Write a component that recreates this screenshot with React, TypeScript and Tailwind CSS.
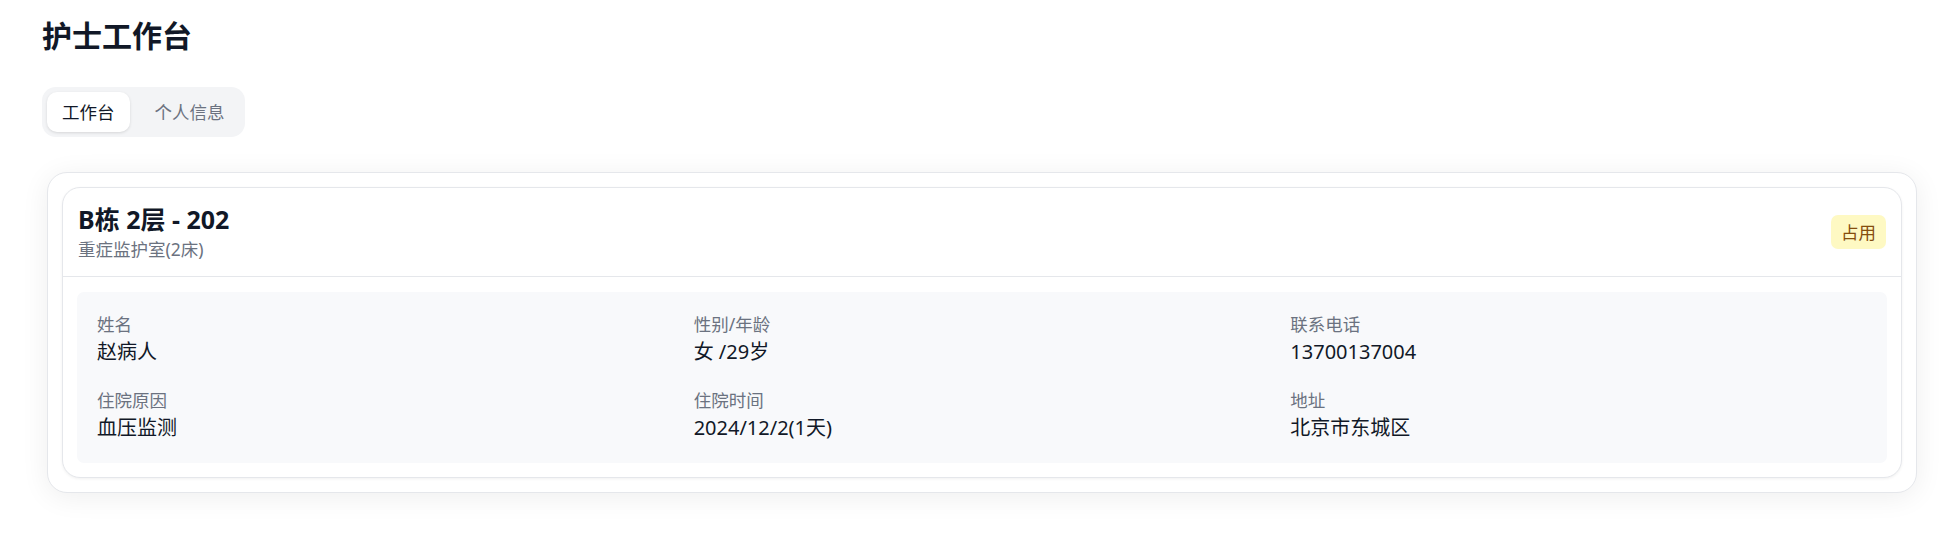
import { useState } from "react";

export default function App() {
  const [tab, setTab] = useState<"work" | "profile">("work");

  const fields = [
    { label: "姓名", value: "赵病人" },
    { label: "性别/年龄", value: "女 /29岁" },
    { label: "联系电话", value: "13700137004" },
    { label: "住院原因", value: "血压监测" },
    { label: "住院时间", value: "2024/12/2(1天)" },
    { label: "地址", value: "北京市东城区" },
  ];

  return (
    <div
      className="min-h-screen bg-white px-[42px] pt-[18px] pb-[40px] text-[#111827]"
      style={{ fontFamily: '"Noto Sans", "Noto Sans CJK SC", sans-serif' }}
    >
      {/* Header */}
      <h1 className="text-[30px] leading-[36px] font-bold text-[#111827]">护士工作台</h1>

      {/* Tabs */}
      <div className="mt-[33px] inline-flex gap-[10px] rounded-[14px] bg-[#f3f4f6] p-[5px]">
        <button
          onClick={() => setTab("work")}
          className={`h-[40px] rounded-[10px] px-[15px] text-[17.5px] leading-[25px] ${
            tab === "work" ? "bg-white text-[#111827] shadow-[0_1px_3px_rgba(0,0,0,0.12)]" : "text-[#6b7280]"
          }`}
        >
          工作台
        </button>
        <button
          onClick={() => setTab("profile")}
          className={`h-[40px] rounded-[10px] px-[15px] text-[17.5px] leading-[25px] ${
            tab === "profile" ? "bg-white text-[#111827] shadow-[0_1px_3px_rgba(0,0,0,0.12)]" : "text-[#6b7280]"
          }`}
        >
          个人信息
        </button>
      </div>

      {/* Room list */}
      <div className="mt-[35px] ml-[5px] rounded-[20px] border border-[#e5e7eb] bg-white p-[14px] shadow-[0_4px_28px_rgba(0,0,0,0.07)]">
        <div className="rounded-[18px] border border-[#e5e7eb] bg-white shadow-[0_1px_3px_rgba(0,0,0,0.06)]">
          <div className="flex items-center justify-between border-b border-[#e5e7eb] px-[15px] py-[14px]">
            <div>
              <h2 className="text-[25px] leading-[35px] font-bold text-[#111827]">B栋 2层 - 202</h2>
              <p className="text-[17.5px] leading-[25px] text-[#6b7280]">重症监护室(2床)</p>
            </div>
            <span className="rounded-[7px] bg-[#fef9c3] px-[10px] py-[4px] text-[17.5px] leading-[26px] text-[#854d0e]">
              占用
            </span>
          </div>
          <div className="px-[14px] pt-[15px] pb-[14px]">
            <div className="grid grid-cols-3 gap-x-[20px] gap-y-[21px] rounded-[7px] bg-[#f8f9fb] p-[20px]">
              {fields.map((f) => (
                <div key={f.label}>
                  <p className="text-[17.5px] leading-[25px] text-[#6b7280]">{f.label}</p>
                  <p className="text-[20px] leading-[30px] text-[#111827]">{f.value}</p>
                </div>
              ))}
            </div>
          </div>
        </div>
      </div>
    </div>
  );
}
